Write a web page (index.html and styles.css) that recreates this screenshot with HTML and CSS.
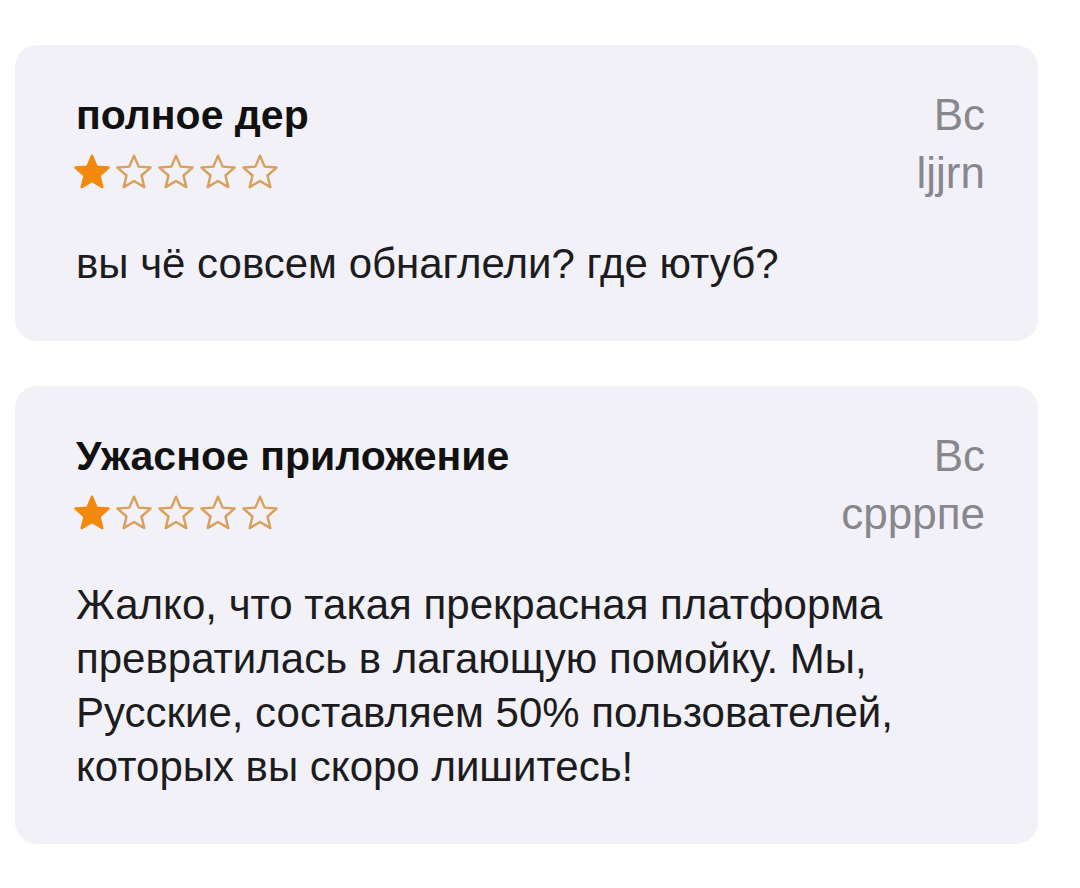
FILE: index.html
```html
<!DOCTYPE html>
<html lang="ru">
<head>
<meta charset="utf-8">
<link rel="stylesheet" href="styles.css">
</head>
<body>
<svg width="0" height="0" class="defs">
  <defs>
    <path id="star" d="M18 1.5 L22.4 11.9 L33.7 12.8 L25.1 20.3 L27.8 31.3 L18 25.5 L8.2 31.3 L10.9 20.3 L2.3 12.8 L13.6 11.9 Z"/>
  </defs>
</svg>
<main class="list">
  <section class="card">
    <div class="head">
      <div class="left">
        <h2 class="title">полное дер</h2>
        <div class="stars">
          <svg class="star full" viewBox="0 0 36 34"><use href="#star"/></svg>
          <svg class="star" viewBox="0 0 36 34"><use href="#star"/></svg>
          <svg class="star" viewBox="0 0 36 34"><use href="#star"/></svg>
          <svg class="star" viewBox="0 0 36 34"><use href="#star"/></svg>
          <svg class="star" viewBox="0 0 36 34"><use href="#star"/></svg>
        </div>
      </div>
      <div class="right">
        <div class="date">Вс</div>
        <div class="author">ljjrn</div>
      </div>
    </div>
    <p class="body">вы чё совсем обнаглели? где ютуб?</p>
  </section>
  <section class="card">
    <div class="head">
      <div class="left">
        <h2 class="title">Ужасное приложение</h2>
        <div class="stars">
          <svg class="star full" viewBox="0 0 36 34"><use href="#star"/></svg>
          <svg class="star" viewBox="0 0 36 34"><use href="#star"/></svg>
          <svg class="star" viewBox="0 0 36 34"><use href="#star"/></svg>
          <svg class="star" viewBox="0 0 36 34"><use href="#star"/></svg>
          <svg class="star" viewBox="0 0 36 34"><use href="#star"/></svg>
        </div>
      </div>
      <div class="right">
        <div class="date">Вс</div>
        <div class="author">срррпе</div>
      </div>
    </div>
    <p class="body">Жалко, что такая прекрасная платформа превратилась в лагающую помойку. Мы, Русские, составляем 50% пользователей, которых вы скоро лишитесь!</p>
  </section>
</main>
</body>
</html>
```

FILE: styles.css
```css
html, body {
  margin: 0;
  padding: 0;
  background: #ffffff;
}
body {
  font-family: "Liberation Sans", Arial, sans-serif;
  color: #1c1c1e;
}
.defs {
  position: absolute;
}
.list {
  display: flex;
  flex-direction: column;
  gap: 45px;
  padding: 45px 42px 0 15px;
}
.card {
  background: #f2f1f8;
  border-radius: 22px;
  padding: 46px 53px 50px 61px;
}
.head {
  display: flex;
  justify-content: space-between;
  align-items: flex-start;
}
.title {
  margin: 0;
  font-size: 41px;
  font-weight: 700;
  line-height: 48px;
  color: #111;
}
.stars {
  display: flex;
  gap: 4px;
  margin-top: 15px;
  margin-left: -3px;
}
.star {
  width: 38px;
  height: 36px;
  fill: none;
  stroke: #d8a05a;
  stroke-width: 2.3;
  stroke-linejoin: round;
}
.star.full {
  fill: #f2890c;
  stroke: #f2890c;
}
.right {
  display: flex;
  flex-direction: column;
  align-items: flex-end;
  color: #88888c;
  font-size: 44px;
  line-height: 48px;
}
.author {
  margin-top: 10px;
}
.body {
  margin: 40px 0 0;
  font-size: 42px;
  line-height: 54px;
  color: #1c1c1e;
  max-width: 862px;
}
```
